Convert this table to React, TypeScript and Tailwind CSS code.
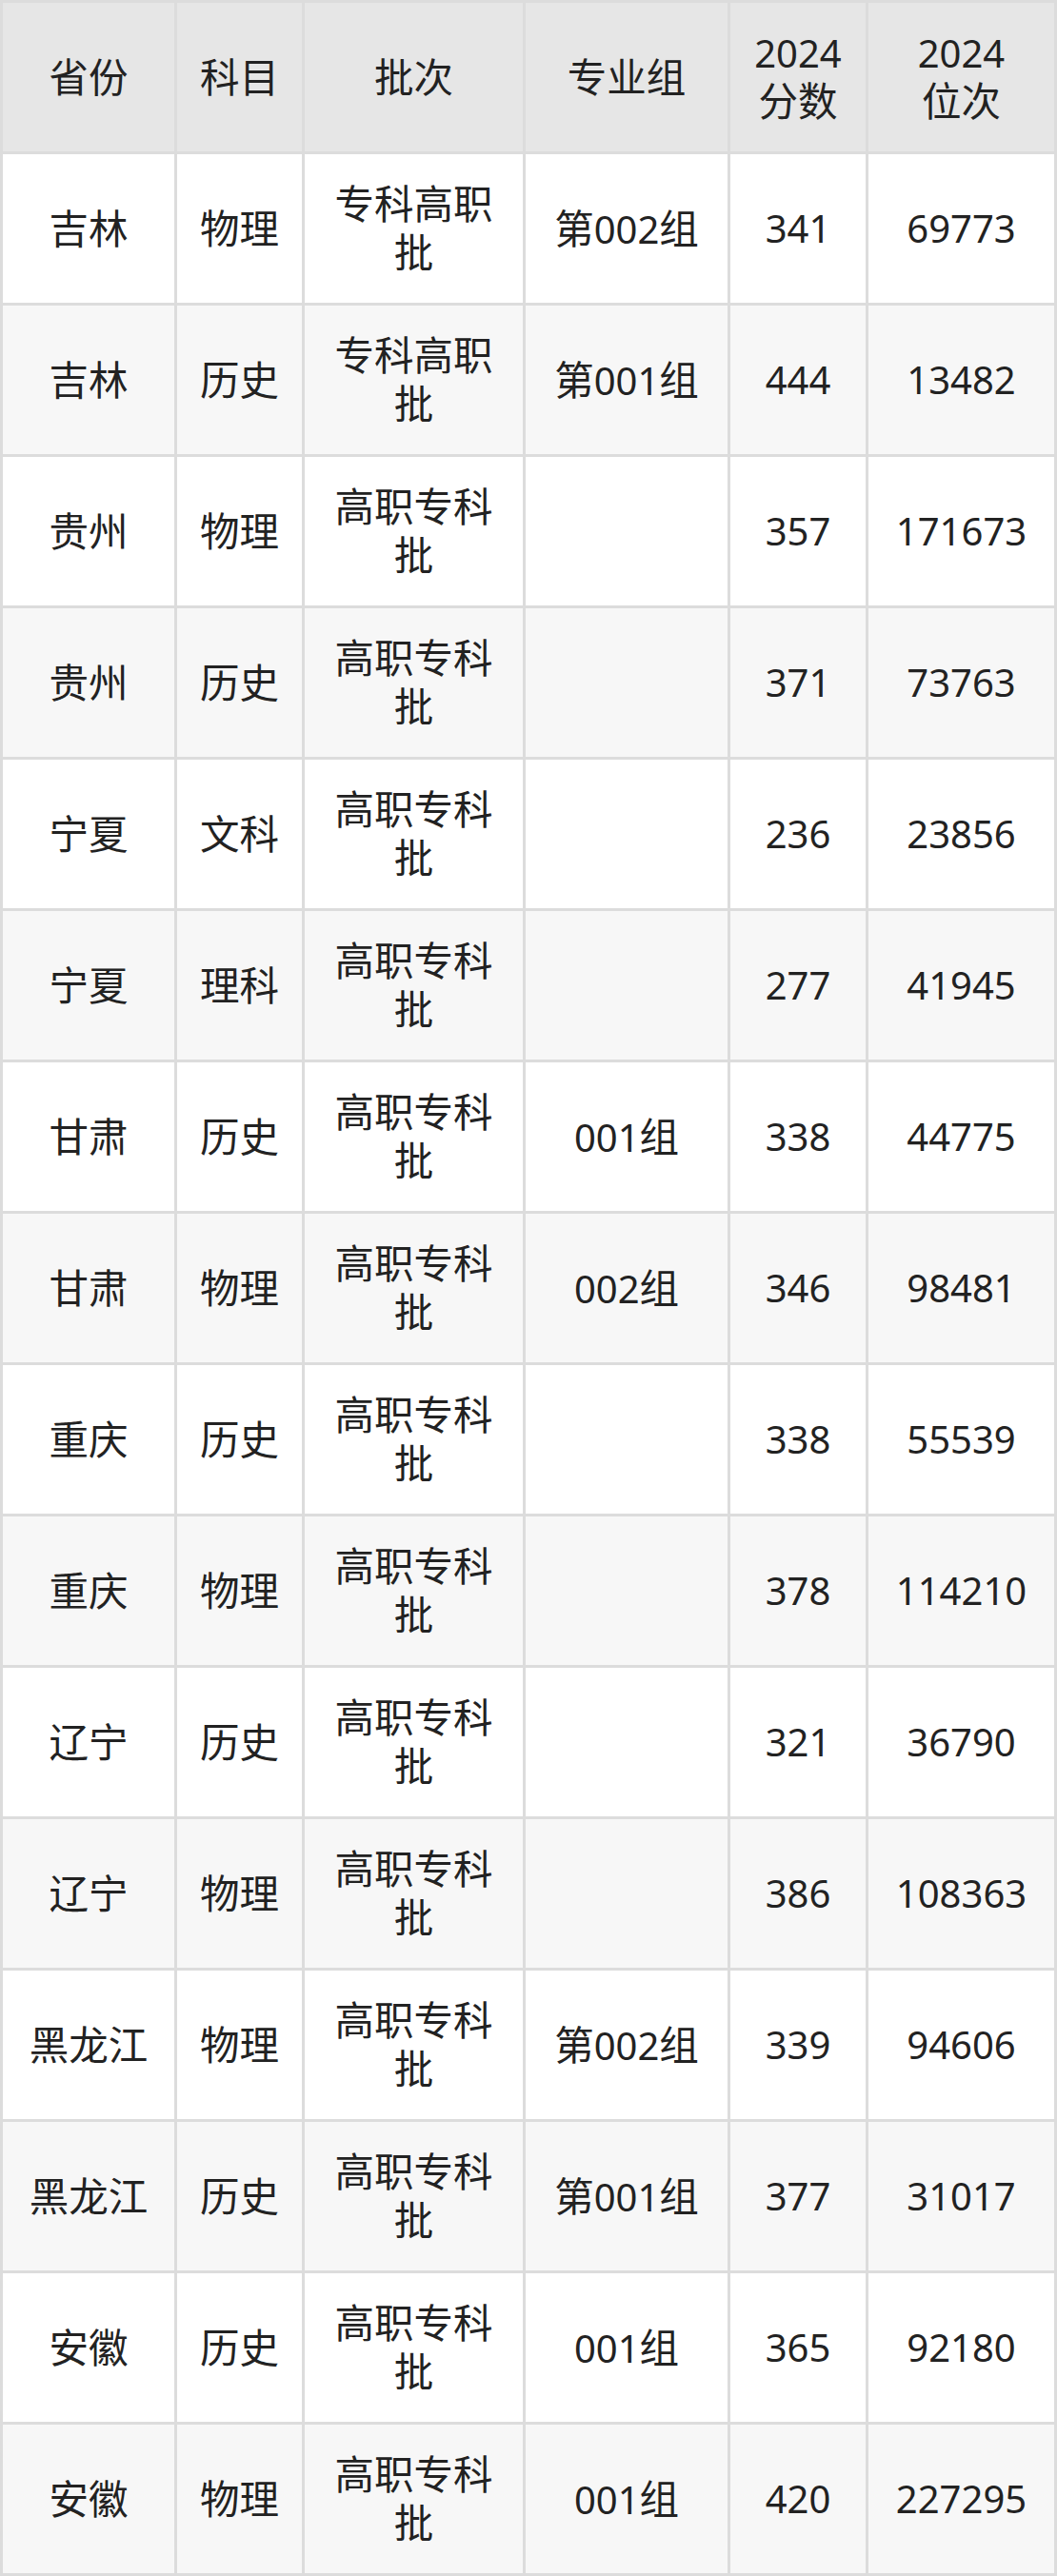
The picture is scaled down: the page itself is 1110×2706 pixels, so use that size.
import React from "react";

const header = ["省份", "科目", "批次", "专业组", "2024\n分数", "2024\n位次"];

const rows: string[][] = [
  ["吉林", "物理", "专科高职批", "第002组", "341", "69773"],
  ["吉林", "历史", "专科高职批", "第001组", "444", "13482"],
  ["贵州", "物理", "高职专科批", "", "357", "171673"],
  ["贵州", "历史", "高职专科批", "", "371", "73763"],
  ["宁夏", "文科", "高职专科批", "", "236", "23856"],
  ["宁夏", "理科", "高职专科批", "", "277", "41945"],
  ["甘肃", "历史", "高职专科批", "001组", "338", "44775"],
  ["甘肃", "物理", "高职专科批", "002组", "346", "98481"],
  ["重庆", "历史", "高职专科批", "", "338", "55539"],
  ["重庆", "物理", "高职专科批", "", "378", "114210"],
  ["辽宁", "历史", "高职专科批", "", "321", "36790"],
  ["辽宁", "物理", "高职专科批", "", "386", "108363"],
  ["黑龙江", "物理", "高职专科批", "第002组", "339", "94606"],
  ["黑龙江", "历史", "高职专科批", "第001组", "377", "31017"],
  ["安徽", "历史", "高职专科批", "001组", "365", "92180"],
  ["安徽", "物理", "高职专科批", "001组", "420", "227295"],
];

function Txt({ s }: { s: string }) {
  const parts = s.split(/([\u4e00-\u9fff]+)/).filter((p) => p !== "");
  return (
    <>
      {parts.map((p, i) =>
        /[\u4e00-\u9fff]/.test(p) ? (
          <span key={i} className="text-[41.5px]">
            {p}
          </span>
        ) : (
          <span key={i}>{p}</span>
        )
      )}
    </>
  );
}

export default function App() {
  return (
    <div
      className="w-[1110px] bg-[#dcdcdc] p-[3px] text-[40px] leading-[50px] text-[#222222]"
      style={{ fontFamily: '"Noto Sans", "Noto Sans CJK SC", sans-serif' }}
    >
      <div className="grid grid-cols-[180px_131px_229px_212px_142px_195px] auto-rows-[156px] gap-[3px]">
        {header.map((h, i) => (
          <div
            key={"h" + i}
            className="flex flex-col items-center justify-center bg-[#e6e6e6] px-5 text-center"
          >
            {h.split("\n").map((line, li) => (
              <div key={li}>
                <Txt s={line} />
              </div>
            ))}
          </div>
        ))}
        {rows.map((r, ri) =>
          r.map((c, ci) => (
            <div
              key={ri + "-" + ci}
              className={
                "flex items-center justify-center px-5 text-center " +
                (ri % 2 === 0 ? "bg-white" : "bg-[#f7f7f7]")
              }
            >
              <div>
                <Txt s={c} />
              </div>
            </div>
          ))
        )}
      </div>
    </div>
  );
}
